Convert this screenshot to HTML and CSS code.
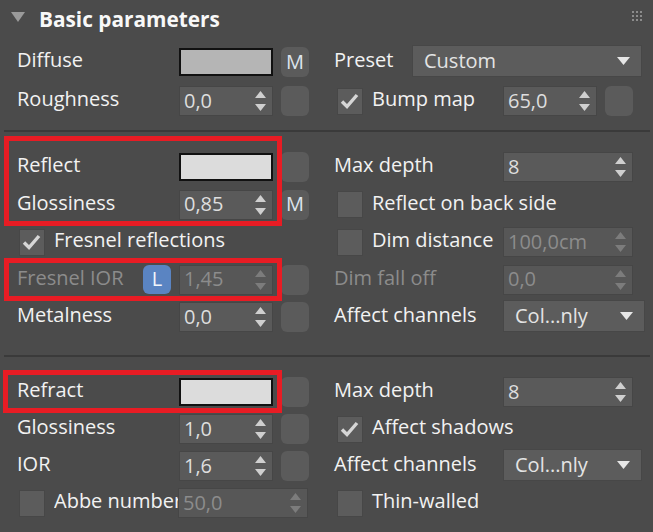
FILE: index.html
```html
<!DOCTYPE html>
<html>
<head>
<meta charset="utf-8">
<link rel="stylesheet" href="styles.css">
</head>
<body>
<div class="panel">
  <div class="head">
    <span class="tri"></span>
    <span class="title">Basic parameters</span>
    <svg class="grip" width="10" height="10" viewBox="0 0 10 10"><g fill="#8c8c8c"><rect x="0" y="0" width="2" height="2"/><rect x="4" y="0" width="2" height="2"/><rect x="8" y="0" width="2" height="2"/><rect x="0" y="4" width="2" height="2"/><rect x="4" y="4" width="2" height="2"/><rect x="8" y="4" width="2" height="2"/><rect x="0" y="8" width="2" height="2"/><rect x="4" y="8" width="2" height="2"/><rect x="8" y="8" width="2" height="2"/></g></svg>
  </div>

  <div class="sec s1">
    <div class="col left">
      <div class="row"><span class="lbl">Diffuse</span><span class="swatch grey"></span><span class="btn">M</span></div>
      <div class="row"><span class="lbl">Roughness</span><span class="spin"><span class="val">0,0</span><svg class="arr" width="11" height="20" viewBox="0 0 11 20"><polygon points="0,7 5.5,0 11,7"/><polygon points="0,13 11,13 5.5,20"/></svg></span><span class="btn"></span></div>
    </div>
    <div class="col right">
      <div class="row"><span class="lbl preset">Preset</span><span class="drop custom"><span class="val">Custom</span><svg class="darr" width="13" height="8" viewBox="0 0 13 8"><polygon points="0,0 13,0 6.5,8"/></svg></span></div>
      <div class="row"><span class="chk on"><svg width="26" height="26" viewBox="0 0 26 26"><path d="M5 13.5 L10 18.5 L20 7" /></svg></span><span class="clbl">Bump map</span><span class="spin"><span class="val">65,0</span><svg class="arr" width="11" height="20" viewBox="0 0 11 20"><polygon points="0,7 5.5,0 11,7"/><polygon points="0,13 11,13 5.5,20"/></svg></span><span class="btn"></span></div>
    </div>
  </div>

  <div class="sep"></div>

  <div class="sec s2">
    <div class="col left">
      <div class="hl hl-reflect">
        <div class="row"><span class="lbl">Reflect</span><span class="swatch light"></span><span class="btn"></span></div>
        <div class="row"><span class="lbl">Glossiness</span><span class="spin"><span class="val">0,85</span><svg class="arr" width="11" height="20" viewBox="0 0 11 20"><polygon points="0,7 5.5,0 11,7"/><polygon points="0,13 11,13 5.5,20"/></svg></span><span class="btn">M</span></div>
      </div>
      <div class="row"><span class="chk on lchk"><svg width="26" height="26" viewBox="0 0 26 26"><path d="M5 13.5 L10 18.5 L20 7" /></svg></span><span class="clbl">Fresnel reflections</span></div>
      <div class="hl hl-ior">
        <div class="row"><span class="lbl short dis">Fresnel IOR</span><span class="badge">L</span><span class="spin dis"><span class="val">1,45</span><svg class="arr" width="11" height="20" viewBox="0 0 11 20"><polygon points="0,7 5.5,0 11,7"/><polygon points="0,13 11,13 5.5,20"/></svg></span><span class="btn"></span></div>
      </div>
      <div class="row"><span class="lbl">Metalness</span><span class="spin"><span class="val">0,0</span><svg class="arr" width="11" height="20" viewBox="0 0 11 20"><polygon points="0,7 5.5,0 11,7"/><polygon points="0,13 11,13 5.5,20"/></svg></span><span class="btn"></span></div>
    </div>
    <div class="col right">
      <div class="row"><span class="lbl">Max depth</span><span class="spin wide"><span class="val">8</span><svg class="arr" width="11" height="20" viewBox="0 0 11 20"><polygon points="0,7 5.5,0 11,7"/><polygon points="0,13 11,13 5.5,20"/></svg></span></div>
      <div class="row"><span class="chk"></span><span class="clbl free">Reflect on back side</span></div>
      <div class="row"><span class="chk"></span><span class="clbl">Dim distance</span><span class="spin wide dis"><span class="val">100,0cm</span><svg class="arr" width="11" height="20" viewBox="0 0 11 20"><polygon points="0,7 5.5,0 11,7"/><polygon points="0,13 11,13 5.5,20"/></svg></span></div>
      <div class="row"><span class="lbl dis">Dim fall off</span><span class="spin wide dis"><span class="val">0,0</span><svg class="arr" width="11" height="20" viewBox="0 0 11 20"><polygon points="0,7 5.5,0 11,7"/><polygon points="0,13 11,13 5.5,20"/></svg></span></div>
      <div class="row"><span class="lbl">Affect channels</span><span class="drop chan"><span class="val">Col...nly</span><svg class="darr" width="13" height="8" viewBox="0 0 13 8"><polygon points="0,0 13,0 6.5,8"/></svg></span></div>
    </div>
  </div>

  <div class="sep"></div>

  <div class="sec s3">
    <div class="col left">
      <div class="hl hl-refract">
        <div class="row"><span class="lbl">Refract</span><span class="swatch light"></span><span class="btn"></span></div>
      </div>
      <div class="row"><span class="lbl">Glossiness</span><span class="spin"><span class="val">1,0</span><svg class="arr" width="11" height="20" viewBox="0 0 11 20"><polygon points="0,7 5.5,0 11,7"/><polygon points="0,13 11,13 5.5,20"/></svg></span><span class="btn"></span></div>
      <div class="row"><span class="lbl">IOR</span><span class="spin"><span class="val">1,6</span><svg class="arr" width="11" height="20" viewBox="0 0 11 20"><polygon points="0,7 5.5,0 11,7"/><polygon points="0,13 11,13 5.5,20"/></svg></span><span class="btn"></span></div>
      <div class="row"><span class="chk lchk"></span><span class="clbl abbe">Abbe number</span><span class="spin wide dis"><span class="val">50,0</span><svg class="arr" width="11" height="20" viewBox="0 0 11 20"><polygon points="0,7 5.5,0 11,7"/><polygon points="0,13 11,13 5.5,20"/></svg></span></div>
    </div>
    <div class="col right">
      <div class="row"><span class="lbl">Max depth</span><span class="spin wide"><span class="val">8</span><svg class="arr" width="11" height="20" viewBox="0 0 11 20"><polygon points="0,7 5.5,0 11,7"/><polygon points="0,13 11,13 5.5,20"/></svg></span></div>
      <div class="row"><span class="chk on"><svg width="26" height="26" viewBox="0 0 26 26"><path d="M5 13.5 L10 18.5 L20 7" /></svg></span><span class="clbl free">Affect shadows</span></div>
      <div class="row"><span class="lbl">Affect channels</span><span class="drop chan2"><span class="val">Col...nly</span><svg class="darr" width="13" height="8" viewBox="0 0 13 8"><polygon points="0,0 13,0 6.5,8"/></svg></span></div>
      <div class="row"><span class="chk"></span><span class="clbl free">Thin-walled</span></div>
    </div>
  </div>
</div>
</body>
</html>
```

FILE: styles.css
```css
* { box-sizing: border-box; }

html, body {
  margin: 0;
  padding: 0;
}

body {
  width: 653px;
  height: 532px;
  overflow: hidden;
  background: #4b4b4b;
  font-family: "Open Sans", "Noto Sans", sans-serif;
  font-size: 20px;
  color: #f2f2f2;
}

.panel {
  width: 653px;
}

/* header */
.head {
  height: 38px;
  display: flex;
  align-items: center;
  position: relative;
}

.tri {
  width: 0;
  height: 0;
  margin-left: 11px;
  margin-top: -4px;
  border-left: 7px solid transparent;
  border-right: 7px solid transparent;
  border-top: 10px solid #9a9a9a;
}

.title {
  margin-left: 14px;
  margin-top: -1px;
  font-weight: 700;
  font-size: 20.8px;
  line-height: 38px;
  color: #f8f8f8;
}

.grip {
  margin-left: auto;
  margin-right: 11px;
  margin-top: -6px;
}

/* sections */
.sec {
  display: flex;
  padding-left: 17px;
}

.s1 { padding-top: 9px; padding-bottom: 14px; }
.s2 { padding-top: 20px; padding-bottom: 23px; }
.s3 { padding-top: 20px; }

.col {
  display: flex;
  flex-direction: column;
}

.left { width: 317px; }
.right { width: 319px; }

.s1 .col { gap: 9px; }
.s2 .col { gap: 7.5px; }
.s3 .col { gap: 7px; }

.hl {
  position: relative;
  display: flex;
  flex-direction: column;
  gap: 7.5px;
}

.hl::after {
  content: "";
  position: absolute;
  border: 5px solid #e81c24;
  pointer-events: none;
}

.hl-reflect::after { top: -16px; bottom: -6px; left: -13px; right: 52px; }
.hl-ior::after { top: -7px; bottom: -6px; left: -13px; right: 52px; }
.hl-refract::after { top: -7px; bottom: -6px; left: -14px; right: 52px; }

.sep {
  height: 2px;
  margin: 0 3px 0 4px;
  background: #3a3a3a;
}

.row {
  height: 30px;
  display: flex;
  align-items: center;
  white-space: nowrap;
}

.lbl {
  width: 162px;
  flex: none;
  line-height: 30px;
  margin-bottom: 4px;
}

.right .lbl { width: 169px; }
.right .lbl.preset { width: 78px; }
.lbl.short { width: 126px; }

.dis { color: #8c8c8c; }

/* controls */
.swatch {
  width: 94px;
  height: 28px;
  border: 2px solid #111;
  flex: none;
}
.swatch.grey { background: #b5b5b5; }
.swatch.light { background: #dcdcdc; }

.btn {
  width: 28px;
  height: 30px;
  margin-left: 8px;
  border-radius: 6px;
  background: #5b5b5b;
  flex: none;
  display: flex;
  align-items: center;
  justify-content: center;
  color: #dde4ec;
  font-size: 20px;
  padding-bottom: 2px;
}

.spin {
  width: 94px;
  height: 30px;
  flex: none;
  background: #5a5a5a;
  border: 1px solid #464646;
  display: flex;
  align-items: center;
  padding-left: 4px;
  padding-right: 6px;
  color: #dedede;
}
.spin.wide { width: 130px; }

.spin .val { flex: 1; line-height: 28px; margin-bottom: 1px; }

.arr { fill: #cfcfcf; flex: none; }
.spin.dis .arr { fill: #7c7c7c; }
.spin.dis { color: #8c8c8c; background: #575757; }

.drop {
  height: 32px;
  flex: none;
  margin-bottom: 3px;
  background: #5c5c5c;
  border: 1px solid #474747;
  display: flex;
  align-items: center;
  padding-left: 11px;
  padding-right: 11px;
  color: #e4e4e4;
}
.drop .val { flex: 1; }
.drop.custom { width: 230px; }
.drop.chan { width: 142px; }
.drop.chan2 { width: 139px; }
.darr { fill: #e6e6e6; }

.chk {
  width: 26px;
  height: 27px;
  flex: none;
  margin-left: 3px;
  background: #5c5c5c;
  border: 1px solid #474747;
  display: flex;
  align-items: center;
  justify-content: center;
}
.chk.lchk { margin-left: 2px; }
.chk svg { flex: none; margin: -1px; }
.chk path {
  fill: none;
  stroke: #d6d6d6;
  stroke-width: 3.4;
  stroke-linejoin: miter;
}

.clbl {
  margin-left: 9px;
  width: 131px;
  flex: none;
  line-height: 30px;
  margin-bottom: 4px;
}
.clbl.free { width: auto; }
.left .clbl { width: auto; }
.left .clbl.abbe {
  width: 124px;
  overflow: hidden;
}

.badge {
  width: 28px;
  height: 29px;
  flex: none;
  margin-right: 8px;
  border-radius: 6px;
  background: #5a84c2;
  color: #f2f6fb;
  display: flex;
  align-items: center;
  justify-content: center;
  font-size: 20px;
  padding-bottom: 2px;
}
```
